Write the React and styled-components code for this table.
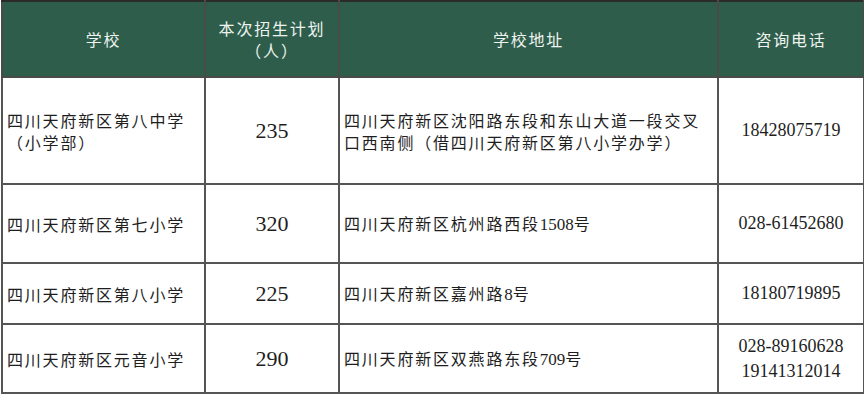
import React from 'react';
import styled, {createGlobalStyle} from 'styled-components';

const GlobalStyle = createGlobalStyle`
	body {
		margin: 0;
		background: #ffffff;
	}
`;

const Page = styled.div`
	padding: 0 0 0 1px;
	width: 864px;
	height: 400px;
	overflow: hidden;
	box-sizing: border-box;
`;

const Table = styled.table`
	border-collapse: collapse;
	table-layout: fixed;
	width: 862px;
	font-family: 'Noto Sans CJK SC', 'Liberation Serif', serif;
	color: #1e1e1e;
`;

const HeadCell = styled.th`
	background: #2e5e4b;
	color: #eef3f0;
	font-weight: 400;
	font-size: 16px;
	letter-spacing: 1.8px;
	line-height: 22px;
	text-align: center;
	border: 2px solid #4a4a4a;
	border-top-color: #2b2b2b;
	padding: 0;
	height: 74px;
`;

const Row = styled.tr`
	height: ${(p) => p.$h}px;
`;

const Cell = styled.td`
	border: 2px solid #555;
	padding: 0 0 0 ${(p) => (p.$center ? 0 : 4)}px;
	text-align: ${(p) => (p.$center ? 'center' : 'left')};
	font-size: 16px;
	letter-spacing: 1.8px;
	line-height: 22px;
	vertical-align: middle;
`;

const Count = styled(Cell)`
	font-family: 'Liberation Serif', serif;
	font-size: 22px;
	letter-spacing: 0;
`;

const Phone = styled(Cell)`
	font-family: 'Liberation Serif', serif;
	font-size: 18px;
	letter-spacing: 0;
	line-height: 25px;
`;

const Num = styled.span`
	font-family: 'Liberation Serif', serif;
	font-size: 17px;
	letter-spacing: 0;
`;

const rows = [
	{
		h: 107,
		school: ['四川天府新区第八中学', '（小学部）'],
		count: '235',
		addr: ['四川天府新区沈阳路东段和东山大道一段交叉', '口西南侧（借四川天府新区第八小学办学）'],
		phone: ['18428075719'],
	},
	{
		h: 79,
		school: ['四川天府新区第七小学'],
		count: '320',
		addr: [
			<>
				四川天府新区杭州路西段<Num>1508</Num>号
			</>,
		],
		phone: ['028-61452680'],
	},
	{
		h: 61,
		school: ['四川天府新区第八小学'],
		count: '225',
		addr: [
			<>
				四川天府新区嘉州路<Num>8</Num>号
			</>,
		],
		phone: ['18180719895'],
	},
	{
		h: 69,
		school: ['四川天府新区元音小学'],
		count: '290',
		addr: [
			<>
				四川天府新区双燕路东段<Num>709</Num>号
			</>,
		],
		phone: ['028-89160628', '19141312014'],
	},
];

const Lines = ({items}) =>
	items.map((line, i) => <div key={i}>{line}</div>);

export default function App() {
	return (
		<Page>
			<GlobalStyle />
			<Table>
				<colgroup>
					<col style={{width: 203}} />
					<col style={{width: 134}} />
					<col style={{width: 379}} />
					<col style={{width: 146}} />
				</colgroup>
				<thead>
					<tr>
						<HeadCell>学校</HeadCell>
						<HeadCell>
							本次招生计划
							<br />
							（人）
						</HeadCell>
						<HeadCell>学校地址</HeadCell>
						<HeadCell>咨询电话</HeadCell>
					</tr>
				</thead>
				<tbody>
					{rows.map((r) => (
						<Row key={r.count} $h={r.h}>
							<Cell>
								<Lines items={r.school} />
							</Cell>
							<Count $center>{r.count}</Count>
							<Cell>
								<Lines items={r.addr} />
							</Cell>
							<Phone $center>
								<Lines items={r.phone} />
							</Phone>
						</Row>
					))}
				</tbody>
			</Table>
		</Page>
	);
}
